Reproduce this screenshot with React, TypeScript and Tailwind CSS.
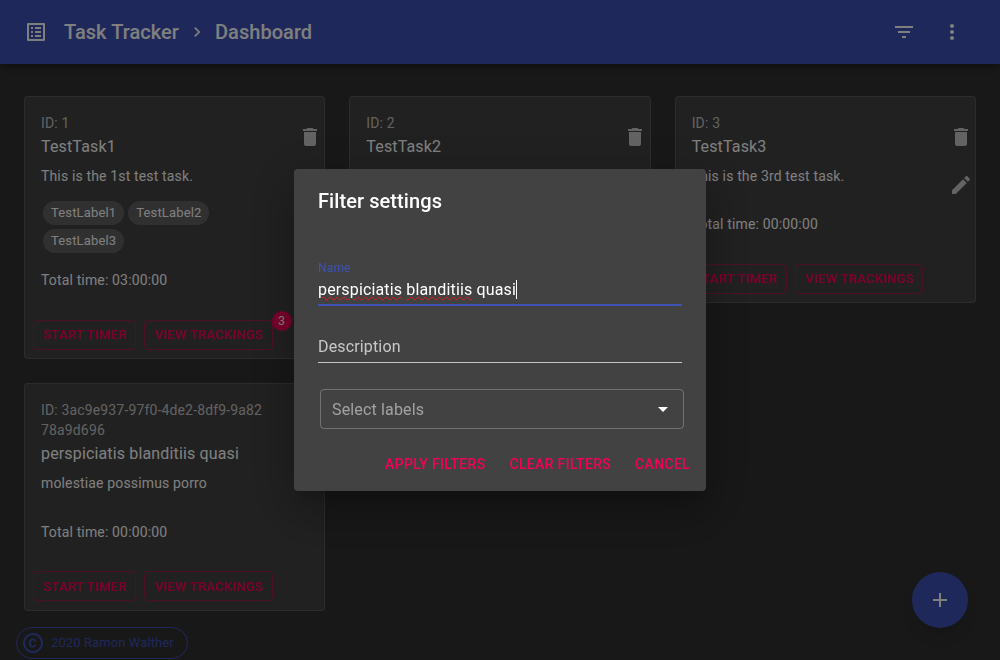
import React from 'react';

type Task = {
    id: string;
    title: string;
    description: string;
    labels: string[];
    total: string;
    trackings?: number;
};

const tasks: Task[] = [
    { id: '1', title: 'TestTask1', description: 'This is the 1st test task.', labels: ['TestLabel1', 'TestLabel2', 'TestLabel3'], total: '03:00:00', trackings: 3 },
    { id: '2', title: 'TestTask2', description: 'This is the 2nd test task.', labels: [], total: '00:00:00' },
    { id: '3', title: 'TestTask3', description: 'This is the 3rd test task.', labels: [], total: '00:00:00' },
    { id: '3ac9e937-97f0-4de2-8df9-9a8278a9d696', title: 'perspiciatis blanditiis quasi', description: 'molestiae possimus porro', labels: [], total: '00:00:00' },
];

function Icon({ d, className }: { d: string; className?: string }) {
    return (
        <svg viewBox="0 0 24 24" fill="currentColor" className={className ?? 'w-6 h-6'}>
            <path d={d} />
        </svg>
    );
}

const icons = {
    list: 'M19 5v14H5V5h14m1.1-2H3.9c-.5 0-.9.4-.9.9v16.2c0 .4.4.9.9.9h16.2c.4 0 .9-.5.9-.9V3.9c0-.5-.5-.9-.9-.9zM11 7h6v2h-6V7zm0 4h6v2h-6v-2zm0 4h6v2h-6zM7 7h2v2H7zm0 4h2v2H7zm0 4h2v2H7z',
    chevron: 'M10 6L8.59 7.41 13.17 12l-4.58 4.59L10 18l6-6z',
    filter: 'M10 18h4v-2h-4v2zM3 6v2h18V6H3zm3 7h12v-2H6v2z',
    more: 'M12 8c1.1 0 2-.9 2-2s-.9-2-2-2-2 .9-2 2 .9 2 2 2zm0 2c-1.1 0-2 .9-2 2s.9 2 2 2 2-.9 2-2-.9-2-2-2zm0 6c-1.1 0-2 .9-2 2s.9 2 2 2 2-.9 2-2-.9-2-2-2z',
    trash: 'M6 19c0 1.1.9 2 2 2h8c1.1 0 2-.9 2-2V7H6v12zM19 4h-3.5l-1-1h-5l-1 1H5v2h14V4z',
    edit: 'M3 17.25V21h3.75L17.81 9.94l-3.75-3.75L3 17.25zM20.71 7.04c.39-.39.39-1.02 0-1.41l-2.34-2.34c-.39-.39-1.02-.39-1.41 0l-1.83 1.83 3.75 3.75 1.83-1.83z',
    plus: 'M19 13h-6v6h-2v-6H5v-2h6V5h2v6h6v2z',
    caret: 'M7 10l5 5 5-5z',
    copyright: 'M11.88 9.14c1.28.06 1.61 1.15 1.63 1.66h1.79c-.08-1.98-1.49-3.19-3.45-3.19C9.64 7.61 8 9 8 12.14c0 1.94.93 4.24 3.84 4.24 2.22 0 3.41-1.65 3.44-2.95h-1.79c-.03.59-.45 1.38-1.63 1.44-1.32-.04-1.86-1.07-1.86-2.73 0-2.87 1.27-2.98 1.88-3zM12 2C6.48 2 2 6.48 2 12s4.48 10 10 10 10-4.48 10-10S17.52 2 12 2zm0 18c-4.41 0-8-3.59-8-8s3.59-8 8-8 8 3.59 8 8-3.59 8-8 8z',
};

function OutlinedButton({ label, badge }: { label: string; badge?: number }) {
    return (
        <button className="relative h-[30px] px-[9px] border border-[#f5005780] rounded text-[13px] font-medium uppercase tracking-[0.25px] text-[#f50057] leading-none whitespace-nowrap">
            {label}
            {badge !== undefined && (
                <span className="absolute -top-2.5 -right-5 w-5 h-5 rounded-full bg-[#f50057] text-white text-xs font-normal tracking-normal flex items-center justify-center">
                    {badge}
                </span>
            )}
        </button>
    );
}

function TaskCard({ task }: { task: Task }) {
    return (
        <div className="bg-[#424242] border border-white/[.12] rounded self-start">
            <div className="flex">
                <div className="flex-1 min-w-0 pl-4 pr-[17px] pt-4 pb-4">
                    <div className="text-sm leading-[1.43] text-white/70 break-all">ID: {task.id}</div>
                    <div className="text-base leading-6 text-white mt-0.5">{task.title}</div>
                    <div className="text-sm leading-[1.43] text-white mt-[7px]">{task.description}</div>
                    <div className="flex flex-wrap mt-[13.4px] mb-[15px]">
                        {task.labels.map((label) => (
                            <span key={label} className="m-0.5 h-6 px-2 rounded-full bg-[#616161] text-white text-[13px] leading-6">
                                {label}
                            </span>
                        ))}
                    </div>
                    <div className="text-sm leading-[1.43] text-white">Total time: {task.total}</div>
                </div>
                <div className="w-12 shrink-0 -mr-[9.6px] pt-4 flex flex-col text-white/70">
                    <button className="w-12 h-12 flex items-center justify-center">
                        <Icon d={icons.trash} />
                    </button>
                    <button className="w-12 h-12 flex items-center justify-center">
                        <Icon d={icons.edit} />
                    </button>
                </div>
            </div>
            <div className="flex gap-2 pt-2 px-2 pb-[8.7px] mt-[5.3px]">
                <OutlinedButton label="Start timer" />
                <OutlinedButton label="View trackings" badge={task.trackings} />
            </div>
        </div>
    );
}

function FilterDialog() {
    return (
        <div className="fixed inset-0 bg-black/50 flex items-center justify-center">
            <div className="w-[412px] bg-[#424242] rounded text-white shadow-[0_11px_15px_-7px_rgba(0,0,0,.2),0_24px_38px_3px_rgba(0,0,0,.14),0_9px_46px_8px_rgba(0,0,0,.12)]">
                <h2 className="px-6 pt-4 pb-4 text-xl leading-8 font-medium tracking-[0.08px]">Filter settings</h2>
                <div className="px-6 pt-[29px]">
                    <div className="text-xs leading-3 text-[#3f51b5]">Name</div>
                    <div className="h-[32px] pt-[4px] border-b-2 border-[#3f51b5] flex items-start text-base leading-6">
                        <span className="underline decoration-wavy decoration-[#e01b1b] decoration-[0.75px] underline-offset-1">perspiciatis</span>
                        <span>&nbsp;</span>
                        <span className="underline decoration-wavy decoration-[#e01b1b] decoration-[0.75px] underline-offset-1">blanditiis</span>
                        <span>&nbsp;quasi</span>
                        <span className="w-px h-[19px] bg-white mt-[2px]" />
                    </div>
                    <div className="mt-[29px] h-[28px] border-b border-white/70 text-base leading-6 text-white/70">Description</div>
                </div>
                <div className="mt-[26px] ml-[26px] mr-[22px] h-10 border border-white/25 rounded flex items-center justify-between pl-[11px] pr-2 text-base text-white/50">
                    <span className="pt-px">Select labels</span>
                    <Icon d={icons.caret} className="w-6 h-6 text-white" />
                </div>
                <div className="flex justify-end gap-2 pt-2 px-2 pb-[9px] mt-[9px]">
                    {['Apply filters', 'Clear filters', 'Cancel'].map((label) => (
                        <button key={label} className="h-9 px-2 text-sm font-medium uppercase tracking-[0.32px] text-[#f50057]">
                            {label}
                        </button>
                    ))}
                </div>
            </div>
        </div>
    );
}

export default function App() {
    return (
        <div className="h-screen overflow-hidden bg-[#303030] text-white tracking-[0.15px] font-['Roboto',sans-serif]">
            <header className="h-16 bg-[#3f51b5] flex items-center pl-6 pr-6 tracking-[0.05px] shadow-[0_2px_4px_-1px_rgba(0,0,0,.2),0_4px_5px_0_rgba(0,0,0,.14),0_1px_10px_0_rgba(0,0,0,.12)]">
                <Icon d={icons.list} />
                <span className="ml-4 text-xl font-medium">Task Tracker</span>
                <Icon d={icons.chevron} className="w-5 h-5 ml-2" />
                <span className="ml-2 text-xl font-medium">Dashboard</span>
                <div className="ml-auto flex">
                    <button className="w-12 h-12 flex items-center justify-center">
                        <Icon d={icons.filter} />
                    </button>
                    <button className="w-12 h-12 flex items-center justify-center">
                        <Icon d={icons.more} />
                    </button>
                </div>
            </header>

            <main className="grid grid-cols-3 gap-6 px-6 pt-8">
                {tasks.map((task) => (
                    <TaskCard key={task.id} task={task} />
                ))}
            </main>

            <footer className="mt-4 px-4">
                <div className="inline-flex items-center h-8 border border-[#3f51b5] rounded-full text-[#3f51b5] text-[13px] tracking-[0.1px] pl-1 pr-[13px]">
                    <Icon d={icons.copyright} className="w-6 h-6" />
                    <span className="ml-1.5">2020 Ramon Walther</span>
                </div>
            </footer>

            <button className="fixed right-8 bottom-8 w-14 h-14 rounded-full bg-[#3f51b5] flex items-center justify-center shadow-lg">
                <Icon d={icons.plus} />
            </button>

            <FilterDialog />
        </div>
    );
}
